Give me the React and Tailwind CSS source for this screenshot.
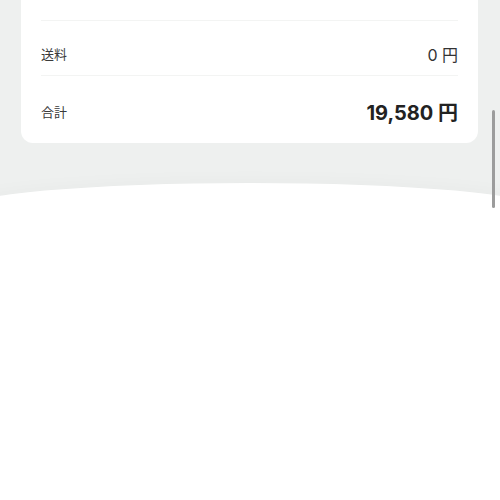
import React from 'react'

const font = { fontFamily: '"Inter", "Noto Sans CJK JP", sans-serif' }

function Row({ label, children, className = '' }) {
  return (
    <div className={`flex items-center justify-between px-5 ${className}`}>
      <span className="text-[13px] text-[#3a3a3a]">{label}</span>
      {children}
    </div>
  )
}

export default function App() {
  return (
    <div className="relative h-[500px] w-[500px] overflow-hidden bg-[#eef0ef]" style={font}>
      {/* summary card (scrolled) */}
      <div className="mx-[21px] w-[457px] rounded-b-[12px] bg-white">
        <div className="mx-5 h-[21px] border-b border-[#f3f4f3]" />
        <Row label="送料" className="h-[54px] pt-[14px]">
          <span className="text-[16px] text-[#333]">0 円</span>
        </Row>
        <div className="mx-5 border-b border-[#f3f4f3]" />
        <Row label="合計" className="h-[67px] pt-[6px]">
          <span className="text-[20px] font-bold text-[#222]">19,580 円</span>
        </Row>
      </div>

      {/* bottom sheet */}
      <div className="-mx-[40px] mt-[40px] h-[400px] rounded-t-[50%_26px] bg-white shadow-[0_-4px_16px_rgba(0,0,0,0.025)]" />

      {/* scrollbar */}
      <div className="absolute right-[5px] top-[110px] h-[98px] w-[3px] rounded-full bg-[#9c9c9c]" />
    </div>
  )
}
